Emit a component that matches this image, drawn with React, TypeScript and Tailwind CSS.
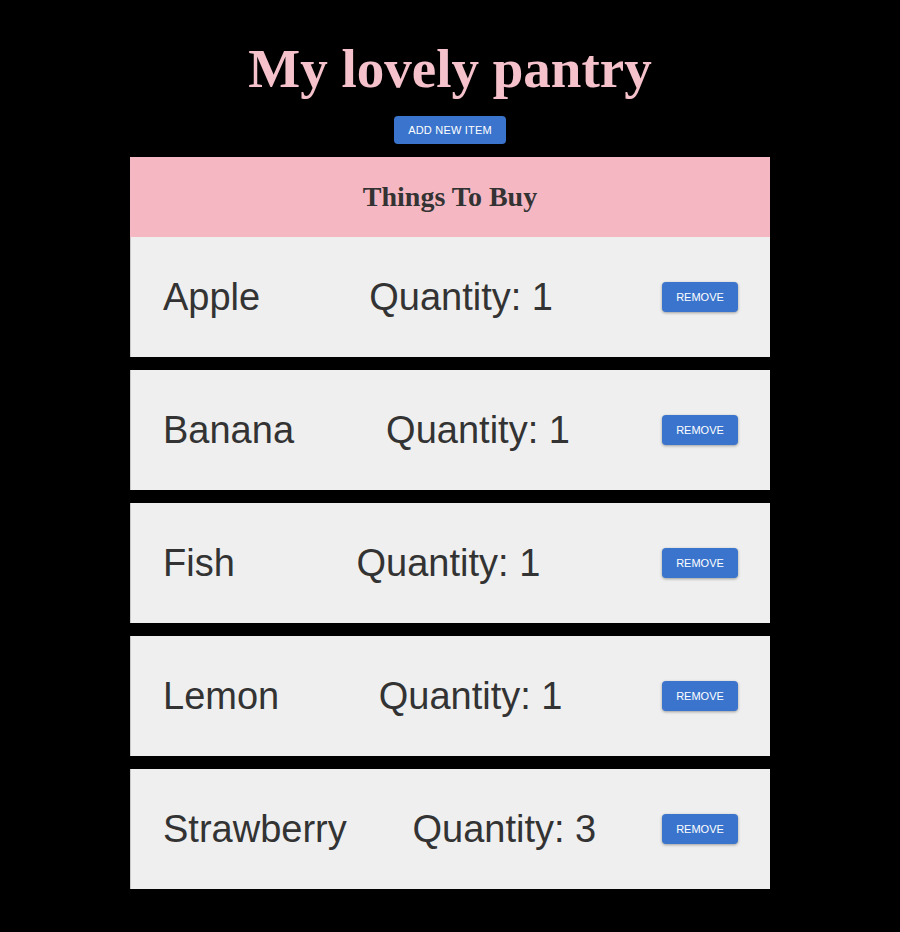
import React from 'react';

interface PantryItem {
  name: string;
  quantity: number;
}

const items: PantryItem[] = [
  { name: 'Apple', quantity: 1 },
  { name: 'Banana', quantity: 1 },
  { name: 'Fish', quantity: 1 },
  { name: 'Lemon', quantity: 1 },
  { name: 'Strawberry', quantity: 3 },
];

const App: React.FC = () => {
  return (
    <div className="min-h-screen bg-black flex flex-col items-center">
      {/* Title */}
      <h1 className="pt-[41px] text-[55px] leading-[55px] font-bold text-[#f5c2cb] font-['Liberation_Serif',serif]">
        My lovely pantry
      </h1>

      <button className="mt-[20px] w-[112px] h-[28px] rounded-[4px] bg-[#3a74cc] text-white text-[11px] font-medium uppercase tracking-[0.2px] shadow-[0_1px_3px_rgba(0,0,0,0.3)] font-['Liberation_Sans',Arial,sans-serif]">
        Add new item
      </button>

      {/* List card */}
      <div className="mt-[13px] w-[640px] flex flex-col gap-[13px]">
        <div className="flex flex-col">
          <div className="h-[80px] bg-[#f5b8c3] flex items-center justify-center">
            <h2 className="text-[28px] font-bold text-[#333333] font-['Liberation_Serif',serif]">Things To Buy</h2>
          </div>
          <ItemRow item={items[0]} />
        </div>
        {items.slice(1).map((item) => (
          <ItemRow key={item.name} item={item} />
        ))}
      </div>
    </div>
  );
};

const ItemRow: React.FC<{ item: PantryItem }> = ({ item }) => (
  <div className="h-[120px] bg-[#efefef] border-l border-[#c8c8c8] flex items-center justify-between pl-[32px] pr-[32px] text-[38px] text-[#333333] font-['Liberation_Sans',Arial,sans-serif]">
    <span>{item.name}</span>
    <span>Quantity: {item.quantity}</span>
    <button className="w-[76px] h-[30px] rounded-[4px] bg-[#3a74cc] text-white text-[11px] font-medium uppercase shadow-[0_1px_3px_rgba(0,0,0,0.35)]">
      Remove
    </button>
  </div>
);

export default App;
